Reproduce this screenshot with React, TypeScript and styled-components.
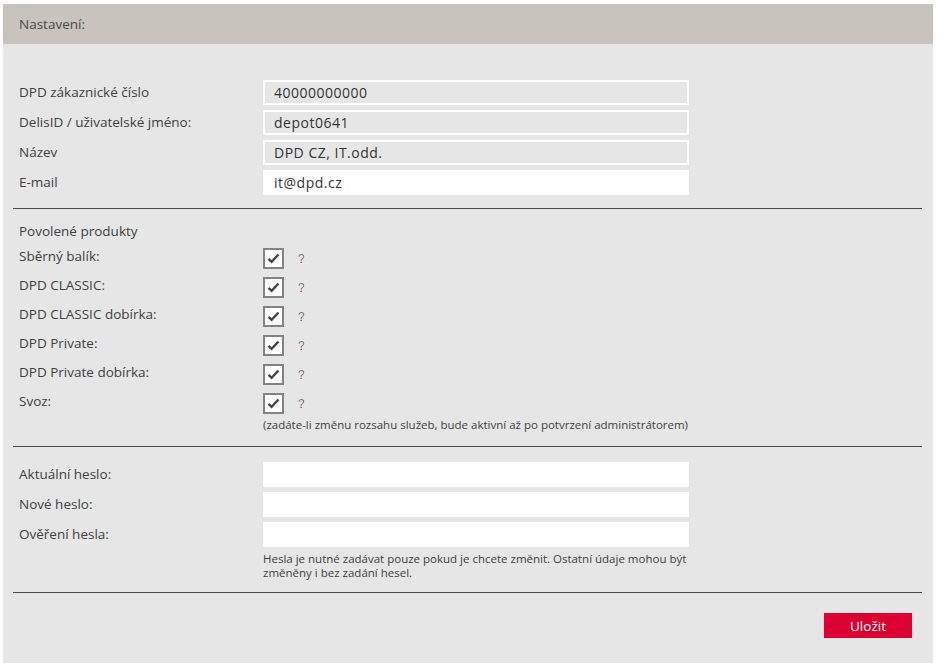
import React from 'react';
import styled, { createGlobalStyle } from 'styled-components';

const GlobalStyle = createGlobalStyle`
  body {
    margin: 0;
    background: #fff;
    font-family: 'Open Sans', Lato, sans-serif;
    color: #414141;
  }
`;

const Page = styled.div`
  padding: 4px 4px 5px 3px;
`;

const Panel = styled.div`
  width: 930px;
  background: #e6e6e6;
`;

const Header = styled.div`
  height: 40px;
  background: #c8c3bd;
  display: flex;
  align-items: center;
  padding-left: 16px;
  font-size: 13.5px;
  color: #4a4a4a;
`;

const Body = styled.div`
  padding: 36px 11px 25px 10px;
`;

type SectionProps = {
  top?: number;
  bottom?: number;
};

const Section = styled.div<SectionProps>`
  padding: ${(p) => p.top ?? 0}px 0 ${(p) => p.bottom ?? 0}px 6px;
  display: flex;
  flex-direction: column;
`;

const Divider = styled.hr`
  margin: 0;
  border: 0;
  border-top: 1px solid #4a4a4a;
`;

const Row = styled.div<{ gap?: number }>`
  display: grid;
  grid-template-columns: 244px 426px;
  align-items: center;
  margin-bottom: ${(p) => p.gap ?? 5}px;
`;

const Label = styled.label`
  font-size: 13.5px;
  color: #414141;
  line-height: 17px;
`;

const Input = styled.input<{ readOnly?: boolean }>`
  box-sizing: border-box;
  width: 426px;
  height: 25px;
  border: ${(p) => (p.readOnly ? '2px solid #fff' : '0')};
  background: ${(p) => (p.readOnly ? '#e6e6e6' : '#fff')};
  padding: 0 0 0 ${(p) => (p.readOnly ? 9 : 11)}px;
  font-family: 'Open Sans', Lato, sans-serif;
  font-size: 14px;
  letter-spacing: 0.5px;
  color: #333;
  outline: none;
`;

const GroupTitle = styled.div`
  font-size: 13.5px;
  height: 16px;
  line-height: 16px;
  margin-bottom: 9px;
`;

const CheckCell = styled.div`
  display: flex;
  align-items: center;
`;

const Box = styled.span`
  box-sizing: border-box;
  width: 21px;
  height: 21px;
  border: 2px solid #838383;
  background: #fff;
  display: flex;
  align-items: center;
  justify-content: center;
`;

const Help = styled.span`
  display: inline-block;
  margin-left: 14px;
  font-size: 12px;
  font-family: 'Liberation Sans', sans-serif;
  line-height: 14px;
  background: linear-gradient(#777 0%, #777 64%, #e0002a 64%, #e0002a 100%);
  -webkit-background-clip: text;
  background-clip: text;
  -webkit-text-fill-color: transparent;
  color: transparent;
  cursor: help;
`;

const CheckLabel = styled(Label)`
  margin-bottom: 4px;
`;

const Note = styled.div`
  font-size: 11.5px;
  color: #414141;
  line-height: 14px;
`;

const NoteRow = styled.div<{ shift?: number }>`
  display: grid;
  grid-template-columns: 244px 426px;
  margin-top: ${(p) => p.shift ?? 0}px;
`;

const Footer = styled.div`
  display: flex;
  justify-content: flex-end;
  padding: 20px 10px 0 0;
`;

const Button = styled.button`
  width: 88px;
  height: 25px;
  border: 0;
  background: #dc0032;
  color: #fff;
  font-family: 'Open Sans', Lato, sans-serif;
  font-size: 13.5px;
  cursor: pointer;
`;

const Check = () => (
  <svg width="13" height="11" viewBox="0 0 13 11">
    <path d="M1.5 5.8 L4.6 8.8 L11.5 1.5" fill="none" stroke="#444" strokeWidth="2.4" />
  </svg>
);

const account = [
  { label: 'DPD zákaznické číslo', value: '40000000000', readOnly: true },
  { label: 'DelisID / uživatelské jméno:', value: 'depot0641', readOnly: true },
  { label: 'Název', value: 'DPD CZ, IT.odd.', readOnly: true },
  { label: 'E-mail', value: 'it@dpd.cz', readOnly: false },
];

const products = [
  'Sběrný balík:',
  'DPD CLASSIC:',
  'DPD CLASSIC dobírka:',
  'DPD Private:',
  'DPD Private dobírka:',
  'Svoz:',
];

const passwords = ['Aktuální heslo:', 'Nové heslo:', 'Ověření hesla:'];

const App: React.FC = () => {
  return (
    <Page>
      <GlobalStyle />
      <Panel>
        <Header>Nastavení:</Header>
        <Body>
          <Section bottom={8}>
            {account.map((item) => (
              <Row key={item.label}>
                <Label>{item.label}</Label>
                <Input defaultValue={item.value} readOnly={item.readOnly} />
              </Row>
            ))}
          </Section>
          <Divider />
          <Section top={14} bottom={14}>
            <GroupTitle>Povolené produkty</GroupTitle>
            {products.map((p) => (
              <Row key={p} gap={8}>
                <CheckLabel>{p}</CheckLabel>
                <CheckCell>
                  <Box>
                    <Check />
                  </Box>
                  <Help>?</Help>
                </CheckCell>
              </Row>
            ))}
            <NoteRow shift={-4}>
              <span />
              <Note>(zadáte-li změnu rozsahu služeb, bude aktivní až po potvrzení administrátorem)</Note>
            </NoteRow>
          </Section>
          <Divider />
          <Section top={15} bottom={12}>
            {passwords.map((p) => (
              <Row key={p}>
                <Label>{p}</Label>
                <Input type="password" />
              </Row>
            ))}
            <NoteRow>
              <span />
              <Note>
                Hesla je nutné zadávat pouze pokud je chcete změnit. Ostatní údaje mohou být změněny i bez zadání
                hesel.
              </Note>
            </NoteRow>
          </Section>
          <Divider />
          <Footer>
            <Button>Uložit</Button>
          </Footer>
        </Body>
      </Panel>
    </Page>
  );
};

export default App;
